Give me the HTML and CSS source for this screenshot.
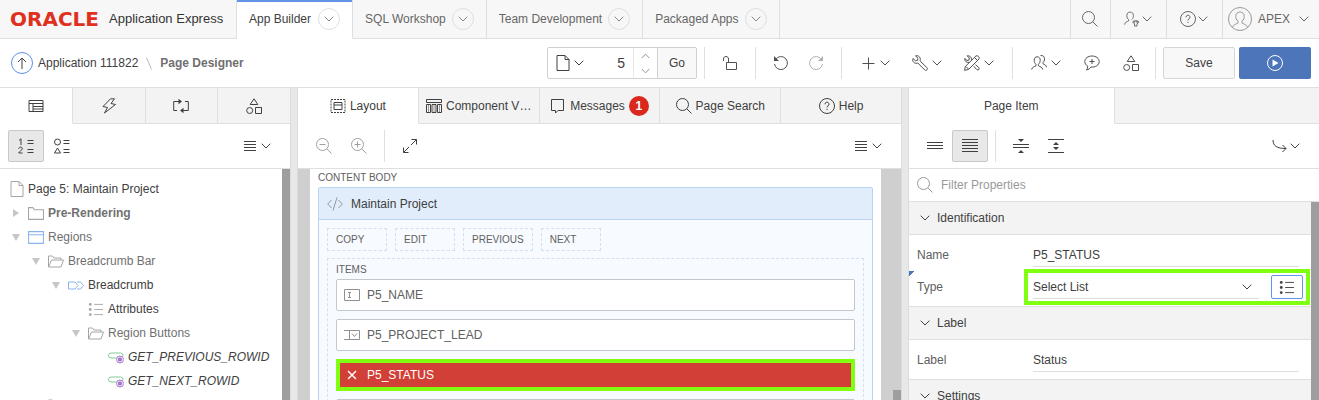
FILE: index.html
```
<!DOCTYPE html>
<html lang="en">
<head>
<meta charset="utf-8">
<title>Page Designer</title>
<link rel="stylesheet" href="styles.css">
</head>
<body>
<svg class="defs" aria-hidden="true">
  <symbol id="chev" viewBox="0 0 10 6"><path d="M.7.7 5 5 9.3.7"/></symbol>
  <symbol id="search" viewBox="0 0 16 16"><circle cx="6.5" cy="6.5" r="6"/><path d="M10.800 10.800 15.500 15.500"/></symbol>
  <symbol id="help" viewBox="0 0 16 16"><circle cx="8" cy="8" r="7.500"/><path d="M6 6.300a2 2 0 1 1 3 1.600C8.200 8.400 8 8.600 8 9.500M8 10.800v1.200"/></symbol>
  <symbol id="user" viewBox="0 0 17 16"><path d="M.7 14c.2-2.800 2.300-3 4.300-4V8.700C3.700 7.700 3 6.500 3 4.500 3 2 4.200.7 6.500.7S10 2 10 4.500c0 1.800-.6 3-1.700 4"/><path d="M10.500 9.800c-1.600.9-1.200 2.800.7 3.200v2.500h2.600V13c1.900-.4 2.300-2.300.7-3.200v1.700h-1v-1.700h-2v1.700h-1z"/></symbol>
  <symbol id="users" viewBox="0 0 16 16"><path d="M.7 14.500c.2-2.500 2.800-2.800 4.300-3.700V9.300C3.800 8.300 3.200 7 3.200 5.200c0-2.200 1.200-3.400 3-3.400s3 1.200 3 3.400c0 1.800-.6 3.100-1.800 4.100v1.500c1.500.9 4.100 1.200 4.300 3.700M9.500.6c2.500-.5 4 1 4 3.200 0 1.800-.5 2.800-1.500 3.700v1.300c1.400.8 3.300 1.200 3.500 3.400"/></symbol>
  <symbol id="shapes" viewBox="0 0 16 16"><path d="M8 .8 11.800 6.500H4.200zM9.500 9.500h6v6h-6z"/><circle cx="3.700" cy="12.500" r="3"/></symbol>
  <symbol id="doc" viewBox="0 0 14 16"><path d="M1 .5h8l4 4v11H1zM9 .5v4h4"/></symbol>
  <symbol id="folder" viewBox="0 0 15 12"><path d="M.5 11.500V.5h4l1.500 2h8.500v9z"/></symbol>
  <symbol id="open" viewBox="0 0 16 12"><path d="M.5 11.500V.5h4l1.500 2h7v2M.5 11.500l3-7h12l-2.500 7z"/></symbol>
  <symbol id="lines4" viewBox="0 0 12 12"><path d="M0 1.500h12M0 4.500h12M0 7.500h12M0 10.500h12"/></symbol>
  <symbol id="list" viewBox="0 0 16 14"><path d="M6 1.500h9.500M6 7h9.500M6 12.500h9.500"/><g class="fill"><circle cx="1.800" cy="1.500" r="1.500"/><circle cx="1.800" cy="7" r="1.500"/><circle cx="1.800" cy="12.500" r="1.500"/></g></symbol>
  <symbol id="pill" viewBox="0 0 16 12"><rect x=".5" y="1.500" width="14.500" height="5" rx="2.500" stroke="#7fcf92"/><circle cx="12" cy="8" r="3.500" fill="#fff" stroke="#a77bcb"/><circle cx="12" cy="8" r="2.200" fill="#a77bcb" stroke="none"/></symbol>
</svg>

<header class="header">
  <a class="brand" href="#"><span class="wordmark">ORACLE</span><span class="product">Application Express</span></a>
  <nav class="menu">
    <a class="menu-tab current" href="#">App Builder<span class="round"><svg class="chev"><use href="#chev"/></svg></span></a>
    <a class="menu-tab" href="#">SQL Workshop<span class="round"><svg class="chev"><use href="#chev"/></svg></span></a>
    <a class="menu-tab" href="#">Team Development<span class="round"><svg class="chev"><use href="#chev"/></svg></span></a>
    <a class="menu-tab" href="#">Packaged Apps<span class="round"><svg class="chev"><use href="#chev"/></svg></span></a>
  </nav>
  <div class="tools">
    <button class="tool narrow" aria-label="Search"><svg class="i16"><use href="#search"/></svg></button>
    <button class="tool" aria-label="Administration"><svg class="i16"><use href="#user"/></svg><svg class="chev"><use href="#chev"/></svg></button>
    <button class="tool" aria-label="Help"><svg class="i16"><use href="#help"/></svg><svg class="chev"><use href="#chev"/></svg></button>
    <button class="tool account"><svg class="avatar" viewBox="0 0 24 24"><circle cx="12" cy="12" r="11.500"/><path d="M4.500 20.500c.5-3 3-3 5.500-4.500V14c-1.500-1.200-2.200-2.500-2.200-4.700C7.800 6.500 9.500 5 12 5s4.200 1.500 4.200 4.300c0 2.200-.7 3.500-2.200 4.700v2c2.500 1.500 5 1.500 5.500 4.500"/></svg><span>APEX</span><svg class="chev"><use href="#chev"/></svg></button>
  </div>
</header>

<div class="bar">
  <nav class="crumbs">
    <a class="up" href="#" aria-label="Up"><svg viewBox="0 0 10 12"><path d="M5 12V1M1 5l4-4 4 4"/></svg></a>
    <a href="#">Application 111822</a><svg class="slash" viewBox="0 0 6 13"><path d="M.5.5l5 12"/></svg><b>Page Designer</b>
  </nav>
  <div class="actions">
    <div class="finder">
      <button class="pick" aria-label="Page"><svg class="doc"><use href="#doc"/></svg><svg class="chev"><use href="#chev"/></svg></button>
      <input class="page-no" aria-label="Page number" value="5">
      <span class="spin"><button aria-label="Next page"><svg class="chev flip"><use href="#chev"/></svg></button><button aria-label="Previous page"><svg class="chev"><use href="#chev"/></svg></button></span>
      <button class="go">Go</button>
    </div>
    <i class="sep before"></i>
    <button class="act roomy" aria-label="Lock"><svg class="i16" viewBox="0 0 16 16"><path d="M4.500 7.500h10v7h-10zM6.500 7.500V4C6.500 2.500 5.500 1.500 4 1.500S1.500 2.500 1.500 4v2"/></svg></button>
    <i class="sep"></i>
    <button class="act roomy" aria-label="Undo"><svg class="i16" viewBox="0 0 16 16"><path d="M2.500 4.500A6.500 6.500 0 1 1 1.500 9"/><path class="fill" d="M1 1v5h5z"/></svg></button>
    <button class="act redo" aria-label="Redo"><svg class="i16" viewBox="0 0 16 16"><path d="M13.500 4.500A6.500 6.500 0 1 0 14.500 9"/><path class="fill" d="M15 1v5h-5z"/></svg></button>
    <i class="sep after"></i>
    <button class="act wide" aria-label="Create"><svg class="i16" viewBox="0 0 16 16"><path d="M8.500 2.500v12M2.500 8.500h12"/></svg><svg class="chev"><use href="#chev"/></svg></button>
    <button class="act wide" aria-label="Utilities"><svg class="i16" viewBox="0 0 16 16"><path d="M3.500.9C5.700.2 8 1.500 8.300 3.600c.1.800 0 1.500-.3 2.200l7 7c1.200 1.500-.8 3.500-2.200 2.200l-7-7C3.500 9 .8 7.500.6 4.800L1 3.500l2.500 2.300 2-.5.5-2z"/></svg><svg class="chev"><use href="#chev"/></svg></button>
    <button class="act wide" aria-label="Shared tools"><svg class="i16" viewBox="0 0 16 16"><path d="M5.500 7.300C3 8 .5 6.500.7 3.500L3 5.500l2-.5.300-2L3.200.8C6 .5 8 2.500 7.300 5.200M9.800 11.300l3 3.300c1.500 1.200 3.200-.5 2-2l-3.300-3M12 .9 1.300 11.500.6 15.300l3.900-.8L15.100 3.900C15.800 2 13.900.2 12 .9zM10.500 2.500l3 3M2 11.500l2.500 2.500"/></svg><svg class="chev"><use href="#chev"/></svg></button>
    <i class="sep before after"></i>
    <button class="act wide" aria-label="Team"><svg class="i16"><use href="#users"/></svg><svg class="chev"><use href="#chev"/></svg></button>
    <button class="act" aria-label="Comment"><svg class="i16" viewBox="0 0 16 16"><path d="M8 1C4 1 .8 3.300.8 6.500c0 2 1.200 3.700 3 4.600 0 1.500-.5 2.700-1.300 3.900 2-.4 3.500-1.500 4.500-3 4.500.5 8.200-2 8.200-5.500C15.200 3.300 12 1 8 1zM8 4v5M5.500 6.500h5"/></svg></button>
    <button class="act" aria-label="Shared components"><svg class="i16"><use href="#shapes"/></svg></button>
    <i class="sep last"></i>
    <button class="save">Save</button>
    <button class="run" aria-label="Run page"><svg class="i16" viewBox="0 0 16 16"><circle cx="8" cy="8" r="7.500"/><path class="fill" d="M5.500 4.500v7l6-3.500z"/></svg></button>
  </div>
</div>

<main class="designer">
  <section class="panel">
    <div class="tabs">
      <button class="tab on" aria-label="Rendering"><svg class="i16" viewBox="0 0 16 16"><path d="M1 2.500h14v11H1zM1 5.500h14M5 5.500v8M5 8.500h10M5 11h10"/></svg></button>
      <button class="tab" aria-label="Dynamic actions"><svg class="i16" viewBox="0 0 16 16"><path d="M9.500.8 2 8.500l4.500 1L3.500 15l11-8.500-4.500-1L13.500.8z"/></svg></button>
      <button class="tab" aria-label="Processing"><svg class="i16" viewBox="0 0 16 16"><path d="M4 12.500H.7v-9H6M12 3.500h3.300v9H10"/><path class="fill" d="M5.500.8v5.400l3.500-2.700zM10.500 9.800v5.400L7 12.500z"/></svg></button>
      <button class="tab" aria-label="Shared components"><svg class="i16"><use href="#shapes"/></svg></button>
    </div>
    <div class="strip">
      <button class="sq on" aria-label="Group by order"><svg class="i16" viewBox="0 0 16 16"><path d="M1 2.500 3 .8V7M.7 10.800C.8 8.500 4.500 8.500 4.300 10.800 4.200 12.500.8 13.500.8 15h3.700M9.500 2.500h6M9.500 5.500h6M9.500 11.500h6M9.500 14.500h6"/></svg></button>
      <button class="sq" aria-label="Group by type"><svg class="i16" viewBox="0 0 16 16"><circle cx="3.500" cy="4" r="3"/><path d="M3.500 10l3 5h-6zM9.500 2.500h6M9.500 5.500h6M9.500 11.500h6M9.500 14.500h6"/></svg></button>
      <button class="list-menu" aria-label="Menu"><svg class="bars"><use href="#lines4"/></svg><svg class="chev"><use href="#chev"/></svg></button>
    </div>
    <div class="scroll">
      <ul class="tree">
        <li class="root"><svg class="doc"><use href="#doc"/></svg><span class="ink">Page 5: Maintain Project</span></li>
        <li class="l1"><i class="tw shut"></i><svg class="ti"><use href="#folder"/></svg><b>Pre-Rendering</b></li>
        <li class="l1"><i class="tw"></i><svg class="ti blue" viewBox="0 0 15 12"><path d="M.5.5h14v11H.5zM.5 3.500h14"/></svg><span>Regions</span></li>
        <li class="l2"><i class="tw"></i><svg class="ti"><use href="#open"/></svg><span>Breadcrumb Bar</span></li>
        <li class="l3"><i class="tw"></i><svg class="ti blue" viewBox="0 0 16 12"><path d="M.5 2.500h6.500L10 6 7 9.500H.5zM9 2.500h3.500l3 3.500-3 3.500H9"/></svg><span class="ink">Breadcrumb</span></li>
        <li class="l4"><i class="tw none"></i><svg class="ti"><use href="#list"/></svg><span class="ink">Attributes</span></li>
        <li class="l4"><i class="tw"></i><svg class="ti"><use href="#open"/></svg><span>Region Buttons</span></li>
        <li class="l5"><i class="tw none"></i><svg class="ti"><use href="#pill"/></svg><em class="ink">GET_PREVIOUS_ROWID</em></li>
        <li class="l5"><i class="tw none"></i><svg class="ti"><use href="#pill"/></svg><em class="ink">GET_NEXT_ROWID</em></li>
        <li class="l2"><i class="tw"></i><svg class="ti"><use href="#open"/></svg></li>
      </ul>
      <div class="thumb"></div>
    </div>
  </section>

  <div class="splitter"></div>

  <section class="panel">
    <div class="tabs">
      <button class="tab on"><svg class="i16" viewBox="0 0 16 16"><path stroke-dasharray="2 1" d="M1 1.500h14v13H1z"/><path d="M4 4.500h8v7H4zM4 7h8"/></svg>Layout</button>
      <button class="tab"><svg class="i16" viewBox="0 0 16 16"><path d="M.5 1.500h15v3H.5zM.5 6.500h4v8h-4zM6 6.500h4v8H6zM11.500 6.500h4v8h-4z"/><path opacity=".5" d="M2.500 7v7M8 7v7M13.500 7v7"/></svg><span class="clip">Component V…</span></button>
      <button class="tab"><svg class="i16" viewBox="0 0 16 16"><path d="M1.500 1.500h12v11H8L5.500 15v-2.500h-4z"/></svg>Messages<span class="badge">1</span></button>
      <button class="tab"><svg class="i16"><use href="#search"/></svg>Page Search</button>
      <button class="tab"><svg class="i16"><use href="#help"/></svg>Help</button>
    </div>
    <div class="strip">
      <button class="sq faint" aria-label="Zoom out"><svg class="i16" viewBox="0 0 16 16"><circle cx="6.500" cy="6.500" r="6"/><path d="M10.800 10.800l4.700 4.700M3.500 6.500h6"/></svg></button>
      <button class="sq faint" aria-label="Zoom in"><svg class="i16" viewBox="0 0 16 16"><circle cx="6.500" cy="6.500" r="6"/><path d="M10.800 10.800l4.700 4.700M3.500 6.500h6M6.500 3.500v6"/></svg></button>
      <i class="sep"></i>
      <button class="sq" aria-label="Expand"><svg class="i16" viewBox="0 0 16 16"><path d="M9 7l5.500-5.500M9.500 1.500h5v5M7 9l-5.500 5.500M1.500 9.500v5h5"/></svg></button>
      <button class="list-menu" aria-label="Menu"><svg class="bars"><use href="#lines4"/></svg><svg class="chev"><use href="#chev"/></svg></button>
    </div>
    <div class="canvas">
      <div class="sheet">
        <div class="caption">CONTENT BODY</div>
        <div class="region">
          <div class="region-head"><svg class="i16" viewBox="0 0 16 16"><path d="M4.500 4 .7 8l3.800 4M11.500 4l3.800 4-3.800 4M10 1.500l-4 13"/></svg>Maintain Project</div>
          <div class="region-body">
            <div class="slots"><span class="slot">COPY</span><span class="slot">EDIT</span><span class="slot">PREVIOUS</span><span class="slot">NEXT</span></div>
            <div class="items">
              <div class="caption">ITEMS</div>
              <button class="item"><svg class="i16" viewBox="0 0 16 16"><path d="M.5 2.500h15v11H.5zM4 5.500h3M5.500 5.500v5M4 10.500h3"/></svg>P5_NAME</button>
              <button class="item"><svg class="i16" viewBox="0 0 16 16"><path d="M0 3.500h15.500v9H0M5.500 3.500v9M8 6.500l2.500 3 2.500-3"/></svg>P5_PROJECT_LEAD</button>
              <button class="item picked"><svg class="i16" viewBox="0 0 16 16"><path d="M4 4l8 8M12 4l-8 8"/></svg>P5_STATUS</button>
              <button class="item" aria-label="Next item"></button>
            </div>
          </div>
        </div>
      </div>
      <div class="gutter"></div>
    </div>
  </section>

  <div class="splitter"></div>

  <section class="panel">
    <div class="tabs"><button class="tab on">Page Item</button><span class="tab filler"></span></div>
    <div class="strip">
      <button class="sq" aria-label="Show common"><svg class="i16" viewBox="0 0 16 16"><path d="M0 4.500h16M0 7.500h16M0 10.500h16"/></svg></button>
      <button class="sq on" aria-label="Show all"><svg class="i16" viewBox="0 0 16 16"><path d="M0 1.500h16M0 4.500h16M0 7.500h16M0 10.500h16M0 13.500h16"/></svg></button>
      <i class="sep tight"></i>
      <button class="sq" aria-label="Collapse all"><svg class="i16" viewBox="0 0 16 16"><path d="M0 6.500h16M0 9.500h16"/><path class="fill" d="M5 1h6L8 4zM5 15h6l-3-3z"/></svg></button>
      <button class="sq" aria-label="Expand all"><svg class="i16" viewBox="0 0 16 16"><path d="M0 1.500h16M0 14.500h16"/><path class="fill" d="M5 7h6L8 4zM5 9h6l-3 3z"/></svg></button>
      <button class="list-menu goto" aria-label="Go to group"><svg class="i16" viewBox="0 0 16 16"><path d="M1 2c0 6 4 8.500 13 8.500M10.500 7l3.500 3.500-3.500 3.500"/></svg><svg class="chev"><use href="#chev"/></svg></button>
    </div>
    <label class="filter"><svg class="i16"><use href="#search"/></svg><input placeholder="Filter Properties" aria-label="Filter Properties"></label>
    <div class="scroll">
      <div class="props">
        <button class="group"><svg class="chev"><use href="#chev"/></svg>Identification</button>
        <div class="fields">
          <div class="row"><label for="f-name">Name</label><div class="value"><input id="f-name" value="P5_STATUS"></div></div>
          <div class="row changed"><label for="f-type">Type</label><div class="value marked"><span class="drop"><select id="f-type"><option>Select List</option></select><svg class="chev"><use href="#chev"/></svg></span><button class="pop" aria-label="Choose type"><svg class="ti"><use href="#list"/></svg></button></div></div>
        </div>
        <button class="group"><svg class="chev"><use href="#chev"/></svg>Label</button>
        <div class="fields">
          <div class="row"><label for="f-label">Label</label><div class="value"><input id="f-label" value="Status"></div></div>
        </div>
        <button class="group"><svg class="chev"><use href="#chev"/></svg>Settings</button>
      </div>
      <div class="thumb"></div>
    </div>
  </section>
</main>
</body>
</html>
```

FILE: styles.css
```
* { box-sizing: border-box; }
html, body { height: 100%; }
body {
  margin: 0;
  display: flex;
  flex-direction: column;
  overflow: hidden;
  background: #fff;
  color: #404040;
  font: 12px/16px "Liberation Sans", Arial, sans-serif;
}
a { color: inherit; text-decoration: none; }
button, input, select {
  margin: 0;
  padding: 0;
  border: 0;
  background: none;
  color: inherit;
  font: inherit;
  outline: 0;
}
svg { flex: none; fill: none; stroke: currentColor; stroke-width: 1; }
.fill { fill: currentColor; stroke: none; }
.defs { position: absolute; width: 0; height: 0; }
.i16 { width: 16px; height: 16px; }
.chev { width: 10px; height: 6px; }
.flip { transform: rotate(180deg); }
.doc { width: 14px; height: 16px; }
.bars { width: 12px; height: 12px; }

/* Header */
.header { display: flex; flex: none; height: 39px; background: #f7f7f7; color: #666; }
.brand {
  display: flex;
  align-items: center;
  width: 237px;
  padding-left: 10px;
  border-right: 1px solid #dfdfdf;
  border-bottom: 1px solid #dfdfdf;
}
.wordmark { width: 99px; color: #e0301e; font: bold 20px/24px "DejaVu Sans", sans-serif; }
.product { color: #333; font-size: 13px; }
.menu { display: flex; }
.menu-tab {
  display: flex;
  align-items: center;
  gap: 6px;
  padding: 0 12px;
  border-right: 1px solid #dfdfdf;
  border-bottom: 1px solid #dfdfdf;
}
.menu-tab.current { gap: 7px; background: #fff; color: #404040; border-bottom-color: #fff; box-shadow: inset 0 2px #6194e4; }
.round {
  display: flex;
  align-items: center;
  justify-content: center;
  width: 22px;
  height: 22px;
  border: 1px solid #dfdfdf;
  border-radius: 50%;
  color: #888;
}
.tools { display: flex; flex: 1; justify-content: flex-end; border-bottom: 1px solid #dfdfdf; }
.tool {
  display: flex;
  align-items: center;
  justify-content: center;
  gap: 2px;
  width: 56px;
  padding-right: 2px;
  border-left: 1px solid #dfdfdf;
}
.tool.narrow { width: 40px; }
.tool.account { width: 97px; gap: 6px; padding-right: 5px; }
.account .chev { margin-left: 3px; }
.avatar { width: 24px; height: 24px; color: #999; }

/* Page bar */
.bar {
  display: flex;
  flex: none;
  align-items: center;
  justify-content: space-between;
  height: 49px;
  padding: 0 8px 0 11px;
  border-bottom: 1px solid #dfdfdf;
}
.crumbs { display: flex; align-items: center; }
.crumbs b { color: #707070; }
.up {
  display: flex;
  align-items: center;
  justify-content: center;
  width: 22px;
  height: 22px;
  margin-right: 5px;
  border: 1px solid #5c92e6;
  border-radius: 50%;
}
.up svg { width: 10px; height: 12px; }
.slash { width: 6px; height: 13px; margin: 0 8px; color: #bbb; }
.actions { display: flex; align-items: center; height: 32px; }
.finder { display: flex; width: 150px; height: 32px; border: 1px solid #d0d0d0; border-radius: 2px; }
.pick { display: flex; align-items: center; gap: 4px; padding-left: 8px; }
.page-no { flex: 1; width: 20px; padding-right: 8px; border-right: 1px solid #e8e8e8; text-align: right; font-size: 14px; }
.spin { display: flex; flex-direction: column; width: 23px; color: #888; }
.spin button { display: flex; flex: 1; align-items: center; justify-content: center; }
.spin .chev { width: 9px; }
.go { width: 39px; border-left: 1px solid #d0d0d0; background: #f8f8f8; }
.sep { flex: none; width: 1px; height: 32px; background: #dfdfdf; }
.sep.before { margin-left: 7px; }
.sep.after { margin-right: 7px; }
.sep.last { margin: 0 7px 0 5px; }
.act { display: flex; align-items: center; justify-content: center; gap: 4px; width: 39px; height: 32px; color: #505050; }
.act.wide { width: 52px; }
.act.roomy { width: 50px; }
.act.redo { width: 35px; padding-right: 15px; color: #b0b0b0; }
.save { width: 72px; height: 32px; margin-right: 4px; border: 1px solid #d6d6d6; border-radius: 2px; background: #f8f8f8; }
.run { display: flex; align-items: center; justify-content: center; width: 72px; height: 32px; border-radius: 2px; background: #4d75ba; color: #fff; }

/* Three panes */
.designer { display: grid; grid-template-columns: 290px 8px minmax(0, 1fr) 8px 410px; flex: 1; min-height: 0; }
.splitter { background: #e8e8e8; border: solid #dcdcdc; border-width: 0 1px; }
.panel { display: flex; flex-direction: column; min-width: 0; min-height: 0; }
.tabs { display: flex; flex: none; height: 36px; }
.tab {
  display: flex;
  flex: 1 1 0;
  align-items: center;
  justify-content: center;
  gap: 4px;
  min-width: 0;
  padding: 0 4px;
  background: #f3f3f3;
  border-right: 1px solid #dfdfdf;
  border-bottom: 1px solid #dfdfdf;
  white-space: nowrap;
}
.tab:last-child { border-right: 0; }
.tab.on { background: #fff; border-bottom-color: #fff; }
.clip { min-width: 0; overflow: hidden; }
.badge { min-width: 20px; height: 20px; border-radius: 10px; background: #da291c; color: #fff; font-weight: bold; line-height: 20px; text-align: center; }
.strip { display: flex; flex: none; align-items: center; height: 45px; padding: 0 8px; border-bottom: 1px solid #dfdfdf; }
.sq { display: flex; align-items: center; justify-content: center; width: 35px; height: 32px; }
.sq.on { width: 36px; border: 1px solid #c8c8c8; border-radius: 2px; background: #e8e8e8; }
.faint { color: #a0a0a0; }
.strip .sep { margin: 0 7px 0 8px; }
.strip .sep.tight { margin: 0 7px; }
.list-menu { display: flex; align-items: center; gap: 5px; height: 32px; margin-left: auto; padding-right: 11px; }
.goto { gap: 2px; }
.scroll { display: flex; flex: 1; min-height: 0; overflow: hidden; }
.thumb { flex: none; width: 8px; background: #9e9e9e; }

/* Tree */
.tree { flex: 1; margin: 0; padding: 8px 0 0; list-style: none; color: #707070; }
.tree li { display: flex; align-items: center; height: 24px; padding-left: 10px; white-space: nowrap; }
.tree svg { color: #a6a6a6; }
.tree svg.blue { color: #8cb2f0; }
.root { gap: 4px; }
.ink { color: #404040; }
.ti { width: 16px; height: 13px; margin-right: 4px; }
.tree .l2 { padding-left: 30px; }
.tree .l3 { padding-left: 50px; }
.tree .l4 { padding-left: 70px; }
.tree .l5 { padding-left: 90px; }
.tw { width: 18px; height: 8px; background: linear-gradient(#c6c6c6, #c6c6c6) 2px 0 / 8px 8px no-repeat; clip-path: polygon(2px 1px, 10px 1px, 6px 8px); }
.tw.shut { clip-path: polygon(3px 0, 9px 4px, 3px 8px); }
.tw.none { background: none; }

/* Layout canvas */
.canvas { display: flex; flex: 1; min-height: 0; padding-left: 12px; overflow: hidden; background: #cfcfcf; }
.sheet { flex: 1; padding: 1px 8px 0; background: #fff; }
.gutter { display: flex; align-items: flex-end; justify-content: flex-end; width: 20px; }
.gutter::after { content: ""; width: 8px; height: 10px; background: #9e9e9e; }
.caption { color: #606060; font-size: 10px; line-height: 16px; }
.region { margin-top: 1px; border: 1px solid #b9d3f5; border-radius: 2px; background: #f7fbff; }
.region-head { display: flex; align-items: center; gap: 8px; height: 32px; padding-left: 8px; border-bottom: 1px solid #b9d3f5; background: #e1edfa; }
.region-head svg { color: #909aa5; }
.region-body { padding: 8px 8px 0; }
.slots { display: flex; gap: 8px; margin-bottom: 7px; color: #606060; font-size: 10px; line-height: 20px; }
.slot { min-width: 60px; padding: 1px 8px 0; border: 1px dashed #d0dff5; }
.items { display: flex; flex-direction: column; gap: 8px; padding: 3px 8px 0; border: 1px dashed #d0e0f5; }
.items .caption { margin-bottom: -7px; }
.item { display: flex; flex: none; align-items: center; gap: 7px; height: 32px; padding-left: 7px; border: 1px solid #c4c8cc; border-radius: 2px; background: #fff; color: #606060; }
.item svg { color: #909090; }
.item.picked { padding-left: 4px; border: 4px solid #80ff10; border-radius: 0; background: #d23f36; color: #fff; }
.item.picked svg { color: #fff; stroke-width: 1.5; }

/* Property editor */
.tabs .filler { border-right: 0; }
.filter { display: flex; flex: none; align-items: center; gap: 8px; height: 33px; padding-left: 8px; border-bottom: 1px solid #dfdfdf; color: #999; }
.filter input { flex: 1; min-width: 0; }
.filter input::placeholder { color: #999; opacity: 1; }
.props { flex: 1; min-width: 0; }
.group { display: flex; align-items: center; gap: 7px; width: 100%; height: 33px; padding-left: 11px; border-bottom: 1px solid #dfdfdf; background: #f3f3f3; text-align: left; }
.fields { padding: 4px 0 3px; border-bottom: 1px solid #dfdfdf; }
.row { display: flex; align-items: center; height: 32px; }
.row label { width: 115px; padding-left: 8px; color: #606060; }
.value { display: flex; flex: 1; align-items: center; justify-content: space-between; min-width: 0; padding: 0 12px 0 9px; }
.value input { flex: 1; min-width: 0; height: 24px; border-bottom: 1px solid #dfdfdf; }
.value.marked { height: 36px; margin-right: 1px; padding: 0 3px 0 5px; border: 4px solid #80ff10; }
.changed { background: linear-gradient(135deg, #4d75ba 4px, transparent 4px) no-repeat; }
.drop { display: flex; flex: 1; align-items: center; height: 24px; margin-right: 12px; padding-right: 7px; border-bottom: 1px solid #dfdfdf; }
.drop select { flex: 1; min-width: 0; appearance: none; }
.pop { display: flex; align-items: center; justify-content: center; width: 32px; height: 24px; border: 1px solid #6194e4; border-radius: 2px; }
.pop .ti { margin: 0; }
```
